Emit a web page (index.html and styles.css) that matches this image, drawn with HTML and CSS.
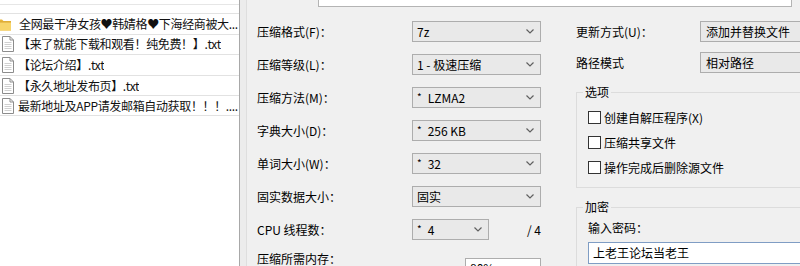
FILE: index.html
```html
<!DOCTYPE html>
<html lang="zh-CN">
<head>
<meta charset="utf-8">
<title>添加到压缩包</title>
<link rel="stylesheet" href="styles.css">
</head>
<body>
<div class="app">
  <div class="files">
    <div class="hdr"></div>
    <div class="row">
      <svg class="icon folder" width="16" height="16" viewBox="0 0 16 16"><path d="M1 3.5h5l1.5 1.5H15v9.5H1z" fill="#e8b53c"/><path d="M1 6h14v8.5H1z" fill="#f7d56b"/><path d="M1 6h14" stroke="#d9a632" stroke-width="1"/></svg>
      <span class="name">全网最干净女孩<span class="heart">♥</span>韩婧格<span class="heart">♥</span>下海经商被大...</span>
    </div>
    <div class="row">
      <svg class="icon" width="12" height="16" viewBox="0 0 12 16"><path d="M0.5 0.5h7.5l3.5 3.5v11.5h-11z" fill="#fff" stroke="#8c8c8c"/><path d="M8 0.5v3.5h3.5" fill="none" stroke="#8c8c8c"/><path d="M2.5 6.5h7M2.5 8.5h7M2.5 10.5h7M2.5 12.5h7" stroke="#d0d0d0"/></svg>
      <span class="name">【来了就能下载和观看！纯免费！】.txt</span>
    </div>
    <div class="row">
      <svg class="icon" width="12" height="16" viewBox="0 0 12 16"><path d="M0.5 0.5h7.5l3.5 3.5v11.5h-11z" fill="#fff" stroke="#8c8c8c"/><path d="M8 0.5v3.5h3.5" fill="none" stroke="#8c8c8c"/><path d="M2.5 6.5h7M2.5 8.5h7M2.5 10.5h7M2.5 12.5h7" stroke="#d0d0d0"/></svg>
      <span class="name">【论坛介绍】.txt</span>
    </div>
    <div class="row">
      <svg class="icon" width="12" height="16" viewBox="0 0 12 16"><path d="M0.5 0.5h7.5l3.5 3.5v11.5h-11z" fill="#fff" stroke="#8c8c8c"/><path d="M8 0.5v3.5h3.5" fill="none" stroke="#8c8c8c"/><path d="M2.5 6.5h7M2.5 8.5h7M2.5 10.5h7M2.5 12.5h7" stroke="#d0d0d0"/></svg>
      <span class="name">【永久地址发布页】.txt</span>
    </div>
    <div class="row">
      <svg class="icon" width="12" height="16" viewBox="0 0 12 16"><path d="M0.5 0.5h7.5l3.5 3.5v11.5h-11z" fill="#fff" stroke="#8c8c8c"/><path d="M8 0.5v3.5h3.5" fill="none" stroke="#8c8c8c"/><path d="M2.5 6.5h7M2.5 8.5h7M2.5 10.5h7M2.5 12.5h7" stroke="#d0d0d0"/></svg>
      <span class="name">最新地址及APP请发邮箱自动获取！！！....</span>
    </div>
  </div>
  <div class="split"></div>
  <div class="dialog">
    <div class="pathbox"></div>
    <div class="cols">
      <div class="left-col">
        <div class="grid">
          <span class="label">压缩格式(F)：</span>
          <div class="combo"><span>7z</span><svg class="chev" width="8" height="5" viewBox="0 0 8 5"><path d="M0.5 0.5L4 4L7.5 0.5" fill="none" stroke="#606060" stroke-width="1.2"/></svg></div>
          <span class="label">压缩等级(L)：</span>
          <div class="combo"><span>1 - 极速压缩</span><svg class="chev" width="8" height="5" viewBox="0 0 8 5"><path d="M0.5 0.5L4 4L7.5 0.5" fill="none" stroke="#606060" stroke-width="1.2"/></svg></div>
          <span class="label">压缩方法(M)：</span>
          <div class="combo"><span><span class="star">*</span>LZMA2</span><svg class="chev" width="8" height="5" viewBox="0 0 8 5"><path d="M0.5 0.5L4 4L7.5 0.5" fill="none" stroke="#606060" stroke-width="1.2"/></svg></div>
          <span class="label">字典大小(D)：</span>
          <div class="combo"><span><span class="star">*</span>256 KB</span><svg class="chev" width="8" height="5" viewBox="0 0 8 5"><path d="M0.5 0.5L4 4L7.5 0.5" fill="none" stroke="#606060" stroke-width="1.2"/></svg></div>
          <span class="label">单词大小(W)：</span>
          <div class="combo"><span><span class="star">*</span>32</span><svg class="chev" width="8" height="5" viewBox="0 0 8 5"><path d="M0.5 0.5L4 4L7.5 0.5" fill="none" stroke="#606060" stroke-width="1.2"/></svg></div>
          <span class="label">固实数据大小：</span>
          <div class="combo"><span>固实</span><svg class="chev" width="8" height="5" viewBox="0 0 8 5"><path d="M0.5 0.5L4 4L7.5 0.5" fill="none" stroke="#606060" stroke-width="1.2"/></svg></div>
          <span class="label">CPU 线程数：</span>
          <div class="cpu">
            <div class="combo small"><span><span class="star">*</span>4</span><svg class="chev" width="8" height="5" viewBox="0 0 8 5"><path d="M0.5 0.5L4 4L7.5 0.5" fill="none" stroke="#606060" stroke-width="1.2"/></svg></div>
            <span class="of">/ 4</span>
          </div>
          <span class="label mem-label">压缩所需内存：</span>
          <div class="membox">80%</div>
        </div>
      </div>
      <div class="right-col">
        <div class="rgrid">
          <span class="label">更新方式(U)：</span>
          <div class="combo wide"><span>添加并替换文件</span></div>
          <span class="label">路径模式</span>
          <div class="combo wide"><span>相对路径</span></div>
        </div>
        <fieldset class="group opts">
          <legend>选项</legend>
          <label class="check"><span class="box"></span>创建自解压程序(X)</label>
          <label class="check"><span class="box"></span>压缩共享文件</label>
          <label class="check"><span class="box"></span>操作完成后删除源文件</label>
        </fieldset>
        <fieldset class="group enc">
          <legend>加密</legend>
          <div class="pwlabel">输入密码：</div>
          <div class="pw">上老王论坛当老王</div>
        </fieldset>
      </div>
    </div>
  </div>
</div>
</body>
</html>
```
FILE: styles.css
```css
* { box-sizing: border-box; }
html, body { margin: 0; height: 266px; overflow: hidden; }
body {
  font: 12px/16px "Noto Sans CJK SC", "Noto Sans", sans-serif;
  color: #000;
  background: #f0f0f0;
}
.app { display: flex; height: 266px; width: 800px; }

.files {
  width: 240px;
  flex: none;
  background: #fff;
  border-right: 1px solid #a8a8a8;
  padding-top: 4px;
}
.hdr { height: 9px; border-top: 1px solid #e6e6e6; }
.row {
  height: 20.6px;
  border-top: 1px solid #e2e2e2;
  display: flex;
  align-items: center;
  white-space: nowrap;
  overflow: hidden;
}
.row:last-child { border-bottom: 1px solid #e2e2e2; }
.icon { flex: none; margin: 0 4px 0 2px; }
.icon.folder { margin: 0 7px 0 -4px; }
.name { overflow: hidden; color: #111; letter-spacing: -0.35px; }
.heart { color: #111; }

.split {
  width: 7px;
  flex: none;
  background: #ececec;
  border-right: 1px solid #dedede;
}

.dialog { flex: 1; min-width: 0; overflow: hidden; }
.pathbox {
  margin-left: 71px;
  width: 474px;
  height: 7px;
  background: #fff;
  border: 1px solid #b4b4b4;
  border-top: none;
}

.cols { display: flex; padding-left: 10px; }
.left-col { width: 284px; flex: none; margin-top: 14px; }
.grid {
  display: grid;
  grid-template-columns: 155px 129px;
  grid-auto-rows: 21px;
  row-gap: 12px;
  align-items: center;
}
.label { white-space: nowrap; }

.combo {
  height: 21px;
  border: 1px solid #adadad;
  background: #e9e9e9;
  display: flex;
  align-items: center;
  justify-content: space-between;
  padding: 0 6px 0 4px;
  white-space: nowrap;
}
.star { font-size: 10px; vertical-align: 2px; margin-right: 6px; }
.chev { flex: none; }
.cpu { display: flex; align-items: center; justify-content: space-between; }
.combo.small { width: 77px; }
.of { padding-right: 0; }
.mem-label { align-self: start; margin-top: -1px; }
.membox {
  justify-self: end;
  align-self: start;
  width: 76px;
  height: 21px;
  margin-top: 6px;
  background: #fff;
  border: 1px solid #adadad;
  padding: 1px 0 0 4px;
}

.right-col { margin-left: 35px; margin-top: 14px; flex: none; width: 260px; }
.rgrid {
  display: grid;
  grid-template-columns: 124px 140px;
  grid-auto-rows: 21px;
  row-gap: 10px;
  align-items: center;
}
.combo.wide { padding-left: 5px; }

.group {
  margin: 11px 0 0 0;
  border: 1px solid #dcdcdc;
  padding: 0 0 0 11px;
  width: 260px;
  min-width: 0;
}
.group legend { padding: 0 2px; margin-left: -5px; line-height: 16px; }
.opts { padding-top: 5px; padding-bottom: 7px; }
.check { display: flex; align-items: center; height: 25px; white-space: nowrap; }
.box {
  width: 13px;
  height: 13px;
  background: #fff;
  border: 1px solid #333;
  margin-right: 3px;
  flex: none;
}
.enc { padding-top: 5px; padding-bottom: 10px; }
.pw {
  margin-top: 6px;
  height: 22px;
  background: #fff;
  border: 1px solid #7f9dc4;
  padding: 2px 0 0 4px;
  white-space: nowrap;
}
```
